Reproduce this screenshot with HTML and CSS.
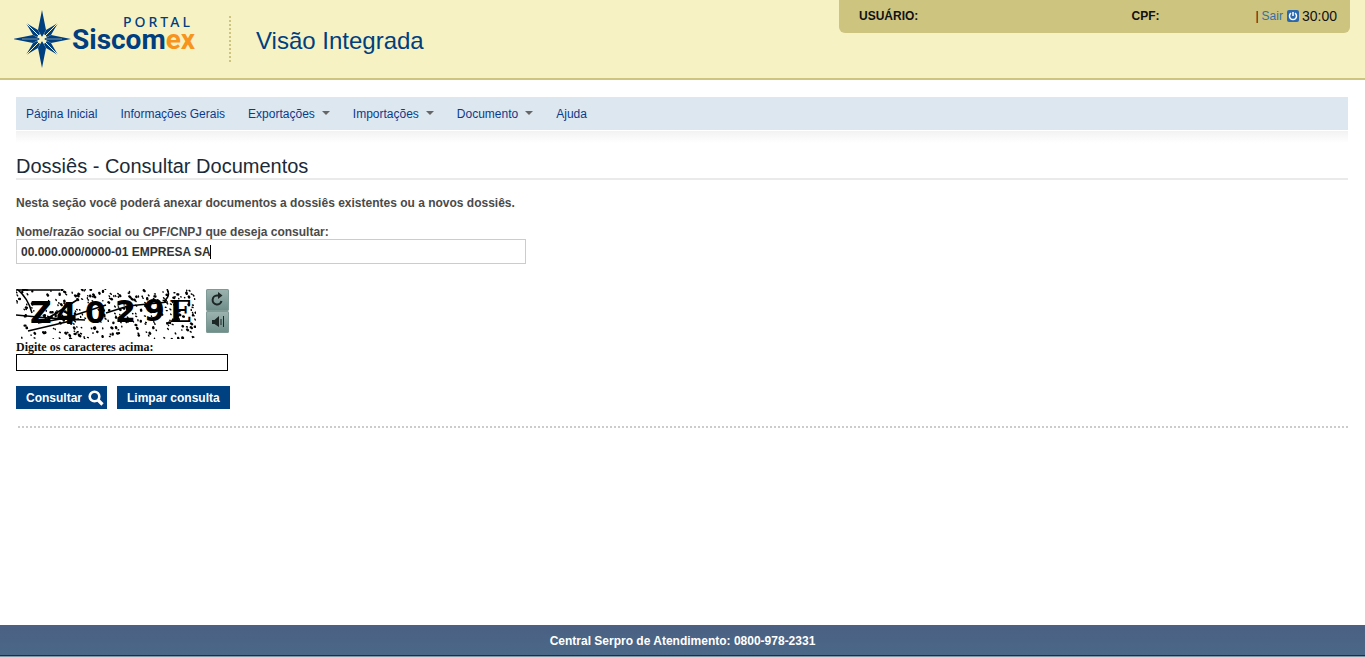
FILE: index.html
```html
<!DOCTYPE html>
<html lang="pt-BR">
<head>
<meta charset="utf-8">
<title>Portal Siscomex - Visão Integrada</title>
<link rel="stylesheet" href="styles.css">
</head>
<body>
<header class="header">
  <svg class="logo" width="184" height="62" viewBox="0 0 184 62" role="img" aria-label="Portal Siscomex">
    <g transform="translate(28 31)">
      <g fill="#003f7f">
        <path d="M0-29 4-9 0-2-4-9ZM29 0 9 4 2 0 9-4ZM0 29-4 9 0 2 4 9ZM-29 0-9-4-2 0-9 4Z"/>
        <path d="M16-16 9-4 5-2 2-5 4-9ZM16 16 4 9 2 5 5 2 9 4ZM-16 16-9 4-5 2-2 5-4 9ZM-16-16-4-9-2-5-5-2-9-4Z"/>
      </g>
      <path d="M3-3 16-16M3 3 16 16M-3 3-16 16M-3-3-16-16" stroke="#f7f2c0" stroke-width="1"/>
      <path d="M4 0H20M-4 0H-20" stroke="#7d97a4" stroke-width="1"/>
      <path d="M-4-2 4 2M-2 4 2-4M-4 2 4-2M-2-4 2 4" stroke="#f7f2c0" stroke-width="1"/>
    </g>
    <text class="logo-top" x="109" y="19">PORTAL</text>
    <text class="logo-name" x="58" y="41">Siscom<tspan class="logo-accent">ex</tspan></text>
  </svg>
  <div class="system">Visão Integrada</div>
  <div class="user">
    <span class="user-name">USUÁRIO:</span>
    <span class="user-cpf">CPF:</span>
    <span class="session">| <a href="#" class="exit">Sair
      <svg width="12" height="12" viewBox="0 0 12 12" aria-hidden="true"><rect width="12" height="12" rx="2" fill="#2b68ad"/><path d="M4 3.2A3.5 3.5 0 1 0 8 3.2M6 2V6" fill="none" stroke="#fff" stroke-width="1.5"/></svg></a>
      <span class="clock">30:00</span></span>
  </div>
</header>

<main class="content">
  <nav class="menu">
    <a href="#">Página Inicial</a>
    <a href="#">Informações Gerais</a>
    <a href="#" class="has-sub">Exportações</a>
    <a href="#" class="has-sub">Importações</a>
    <a href="#" class="has-sub">Documento</a>
    <a href="#">Ajuda</a>
  </nav>
  <div class="menu-shadow"></div>
  <h1 class="title">Dossiês - Consultar Documentos</h1>
  <p class="intro">Nesta seção você poderá anexar documentos a dossiês existentes ou a novos dossiês.</p>
  <form class="form">
    <label class="label" for="nome">Nome/razão social ou CPF/CNPJ que deseja consultar:</label>
    <div class="company-box"><input class="company" id="nome" type="text" value="00.000.000/0000-01 EMPRESA SA"><i class="caret"></i></div>
    <div class="captcha">
      <svg width="180" height="50" viewBox="0 0 180 50" role="img" aria-label="Z4029E">
        <g fill="none" stroke="#000" stroke-linecap="round">
          <path id="specks-small" stroke-width="1.4"/>
          <path id="specks-large" stroke-width="2.4"/>
        </g>
        <g class="captcha-text"><text x="14" y="34">Z</text><text x="40" y="35">4</text><text x="69" y="34">0</text><text x="99" y="33">2</text><text x="128" y="32">9</text><text class="captcha-serif" x="153" y="33">E</text></g>
        <path d="M0 1H44M1 0Q12 9 16 24M0 26Q35 30 69 31M12 42 63 30 M26 33 61 11M22 34 50 29 90 16M90 24 112 17 152 13M151 0Q155 7 148 12" fill="none" stroke="#000" stroke-width="1.6"/>
      </svg>
      <div class="captcha-tools">
        <button type="button" aria-label="Recarregar"><svg width="23" height="22" viewBox="0 0 23 22"><path d="M12.500 6.500H11A4.500 4.500 0 1 0 15.500 12" fill="none" stroke="#1c2625" stroke-width="2"/><path d="M12 3 16.500 6.500 12 10Z" fill="#1c2625"/></svg></button>
        <button type="button" aria-label="Ouvir"><svg width="23" height="22" viewBox="0 0 23 22"><path d="M6 9H8.500L13 5V16L8.500 13H6Z" fill="#1c2625"/><path d="M15 8V14M17.500 5V16" stroke="#1c2625" stroke-width="1"/></svg></button>
      </div>
    </div>
    <label class="captcha-label" for="captcha">Digite os caracteres acima:</label>
    <input class="captcha-input" id="captcha" type="text">
    <div class="actions">
      <button type="button" class="btn btn-search">Consultar
        <svg width="16" height="16" viewBox="0 0 16 16" aria-hidden="true"><circle cx="6.500" cy="6.500" r="4.800" fill="none" stroke="#fff" stroke-width="2.600"/><path d="M10 10 14.500 14.500" stroke="#fff" stroke-width="3.200"/></svg></button>
      <button type="reset" class="btn">Limpar consulta</button>
    </div>
  </form>
  <div class="divider"></div>
</main>

<footer class="footer">Central Serpro de Atendimento: 0800-978-2331</footer>
<script src="script.js"></script>
</body>
</html>
```
FILE: styles.css
```css
* { box-sizing: border-box; }
body {
  margin: 0;
  min-height: 100vh;
  display: flex;
  flex-direction: column;
  background: #fff;
  color: #4a4a4a;
  font: 12px/16px "Liberation Sans", Arial, sans-serif;
}
a { color: inherit; text-decoration: none; }

.header {
  display: flex;
  align-items: flex-start;
  height: 80px;
  padding: 0 15px 0 14px;
  background: #f7f2c4;
  border-bottom: 2px solid #cdc480;
}
.logo { margin-top: 8px; flex: none; }
.logo-top { font: 500 14px "Noto Sans", sans-serif; letter-spacing: 3px; fill: #003f7f; }
.logo-name { font: 700 28px Roboto, sans-serif; fill: #003f7f; }
.logo-accent { fill: #f7941e; }
.system {
  margin: 16px 0 0 31px;
  padding-left: 25px;
  height: 46px;
  border-left: 2px dotted #cdc480;
  color: #003f7f;
  font-size: 24px;
  line-height: 50px;
}
.user {
  display: flex;
  justify-content: space-between;
  align-items: center;
  width: 511px;
  height: 33px;
  margin-left: auto;
  padding: 0 13px 1px 20px;
  background: #cdc480;
  border-radius: 0 0 6px 6px;
  color: #111;
}
.user-name, .user-cpf { font-weight: 700; }
.user-name { flex: 1; }
.user-cpf { width: 124px; }
.session { display: flex; align-items: center; gap: 3px; }
.exit { display: flex; align-items: center; gap: 4px; color: #3a6ea5; }
.clock { font-size: 14px; }

.content { flex: 1; padding: 17px 17px 0 16px; }
.menu {
  display: flex;
  gap: 23px;
  padding: 2px 10px 0;
  background: #dde7ef;
  color: #0b3b8c;
  line-height: 31px;
}
.has-sub { display: flex; align-items: center; gap: 7px; }
.has-sub::after {
  content: "";
  margin-bottom: 3px;
  border: 4px solid transparent;
  border-top-color: #666;
  border-bottom: 0;
}
.menu-shadow {
  height: 12px;
  margin-top: 1px;
  background: linear-gradient(#f2f2f2, #fff);
}
.title {
  margin: 11px 0 0;
  border-bottom: 2px solid #eaeaea;
  color: #1b2a38;
  font-size: 20px;
  font-weight: 400;
  line-height: 24px;
}
.intro { margin: 15px 0 13px; font-weight: 700; }
.form { display: flex; flex-direction: column; align-items: flex-start; }
.label { padding-top: 2px; font-weight: 700; line-height: 13px; }
.company-box { position: relative; }
.company {
  display: block;
  width: 510px;
  height: 25px;
  padding: 0 4px;
  border: 1px solid #ccc;
  color: #333;
  font: 700 12px "Liberation Sans", Arial, sans-serif;
}
.caret { position: absolute; left: 194px; top: 6px; width: 1px; height: 14px; background: #000; }
.captcha { display: flex; gap: 10px; margin-top: 25px; }
.captcha-text { font: 700 30px "DejaVu Sans", sans-serif; }
.captcha-serif { font-family: "DejaVu Serif", serif; }
.captcha-tools { display: flex; flex-direction: column; }
.captcha-tools button {
  width: 23px;
  height: 22px;
  padding: 0;
  border: 0;
  border-radius: 2px;
  background: linear-gradient(#9db5b1, #6d8c88);
  box-shadow: inset 0 0 0 1px #7f9995;
}
.captcha-tools svg { display: block; }
.captcha-label {
  padding-top: 2px;
  color: #111;
  font: 700 12px/13px "Liberation Serif", "Times New Roman", serif;
}
.captcha-input { width: 212px; height: 17px; padding: 0 2px; border: 1px solid #000; }
.actions { display: flex; gap: 10px; margin-top: 15px; }
.btn {
  display: flex;
  align-items: center;
  height: 23px;
  padding: 0 10px;
  border: 0;
  background: #004182;
  color: #fff;
  font: 700 12px "Liberation Sans", Arial, sans-serif;
}
.btn-search { gap: 6px; padding-right: 3px; }
.divider { margin: 17px 0 0 2px; border-top: 2px dotted #ccc; }

.footer {
  height: 32px;
  padding-top: 1px;
  background: linear-gradient(#4b6082, #4a6888);
  border-bottom: 1px solid #7f98a5;
  box-shadow: inset 0 -1px #1c3040;
  color: #fff;
  font-weight: 700;
  line-height: 30px;
  text-align: center;
}
```
FILE: script.js
```js
// Scatter the captcha noise with a fixed seed so it is always the same.
let seed = 4029;
const next = (max) => {
  seed = (seed * 16807) % 2147483647;
  return Math.round((seed / 2147483647) * max * 10) / 10;
};
const scatter = (id, count) => {
  let d = "";
  for (let i = 0; i < count; i++) {
    d += `M${next(180)} ${next(50)}l${next(1)} ${next(1)}`;
  }
  document.getElementById(id).setAttribute("d", d);
};
scatter("specks-small", 200);
scatter("specks-large", 120);
```
